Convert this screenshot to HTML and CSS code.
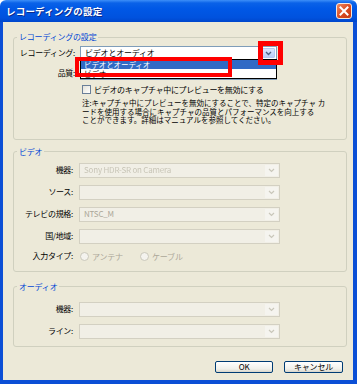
FILE: index.html
```html
<!DOCTYPE html>
<html lang="ja">
<head>
  <meta charset="UTF-8" />
  <title>レコーディングの設定</title>
  <link rel="stylesheet" href="styles.css">
</head>
<body>
  <div class="window">
    <div class="titlebar">
      <span class="title">レコーディングの設定</span>
      <span class="close">
        <svg width="14" height="14" viewBox="0 0 14 14"><path d="M3.5 3.5L10.5 10.5M10.5 3.5L3.5 10.5" stroke="#fff" stroke-width="2" stroke-linecap="square"/></svg>
      </span>
    </div>

    <div class="frame">
      <fieldset class="group group-rec">
        <legend>レコーディングの設定</legend>
        <div class="row">
          <span class="label">レコーディング:</span>
          <div class="combo active">
            <span class="value">ビデオとオーディオ</span>
            <span class="drop"><svg width="7" height="5" viewBox="0 0 7 5"><path d="M1 1l2.5 2.5L6 1" fill="none" stroke="#4d6185" stroke-width="1.4"/></svg></span>
            <ul class="droplist">
              <li class="selected">ビデオとオーディオ</li>
              <li>ビデオ</li>
            </ul>
          </div>
        </div>
        <div class="row">
          <span class="label">品質:</span>
          <div class="combo active">
            <span class="value"></span>
            <span class="drop"><svg width="7" height="5" viewBox="0 0 7 5"><path d="M1 1l2.5 2.5L6 1" fill="none" stroke="#4d6185" stroke-width="1.4"/></svg></span>
          </div>
        </div>
        <label class="check"><span class="box"></span>ビデオのキャプチャ中にプレビューを無効にする</label>
        <p class="note">注:キャプチャ中にプレビューを無効にすることで、特定のキャプチャ カ<br>ードを使用する場合にキャプチャの品質とパフォーマンスを向上する<br>ことができます。詳細はマニュアルを参照してください。</p>
      </fieldset>

      <fieldset class="group group-video">
        <legend>ビデオ</legend>
        <div class="row">
          <span class="label">機器:</span>
          <div class="combo"><span class="value blurred">Sony HDR-SR on Camera</span><span class="drop"><svg width="7" height="5" viewBox="0 0 7 5"><path d="M1 1l2.5 2.5L6 1" fill="none" stroke="#c9c7ba" stroke-width="1.2"/></svg></span></div>
        </div>
        <div class="row">
          <span class="label">ソース:</span>
          <div class="combo"><span class="value"></span><span class="drop"><svg width="7" height="5" viewBox="0 0 7 5"><path d="M1 1l2.5 2.5L6 1" fill="none" stroke="#c9c7ba" stroke-width="1.2"/></svg></span></div>
        </div>
        <div class="row">
          <span class="label">テレビの規格:</span>
          <div class="combo"><span class="value">NTSC_M</span><span class="drop"><svg width="7" height="5" viewBox="0 0 7 5"><path d="M1 1l2.5 2.5L6 1" fill="none" stroke="#c9c7ba" stroke-width="1.2"/></svg></span></div>
        </div>
        <div class="row">
          <span class="label">国/地域:</span>
          <div class="combo"><span class="value"></span><span class="drop"><svg width="7" height="5" viewBox="0 0 7 5"><path d="M1 1l2.5 2.5L6 1" fill="none" stroke="#c9c7ba" stroke-width="1.2"/></svg></span></div>
        </div>
        <div class="row row-radio">
          <span class="label">入力タイプ:</span>
          <div class="radios">
            <span class="radio"><span class="dot"></span>アンテナ</span>
            <span class="radio"><span class="dot"></span>ケーブル</span>
          </div>
        </div>
      </fieldset>

      <fieldset class="group group-audio">
        <legend>オーディオ</legend>
        <div class="row">
          <span class="label">機器:</span>
          <div class="combo"><span class="value"></span><span class="drop"><svg width="7" height="5" viewBox="0 0 7 5"><path d="M1 1l2.5 2.5L6 1" fill="none" stroke="#c9c7ba" stroke-width="1.2"/></svg></span></div>
        </div>
        <div class="row">
          <span class="label">ライン:</span>
          <div class="combo"><span class="value"></span><span class="drop"><svg width="7" height="5" viewBox="0 0 7 5"><path d="M1 1l2.5 2.5L6 1" fill="none" stroke="#c9c7ba" stroke-width="1.2"/></svg></span></div>
        </div>
      </fieldset>

      <div class="buttons">
        <button class="btn">OK</button>
        <button class="btn">キャンセル</button>
      </div>
    </div>

    <span class="mark mark-drop"></span>
    <span class="mark mark-item"></span>
  </div>
</body>
</html>
```

FILE: styles.css
```css
body {
  margin: 0;
  background: #fff;
  font-family: "Noto Sans CJK JP", "Liberation Sans", sans-serif;
  font-size: 8px;
  color: #000;
}
.window {
  position: relative;
  width: 357px;
  height: 384px;
  display: flex;
  flex-direction: column;
}
.titlebar {
  height: 22px;
  flex: none;
  display: flex;
  align-items: center;
  justify-content: space-between;
  padding: 0 5px 0 6px;
  border-radius: 6px 6px 0 0;
  background: linear-gradient(#3d8ff8 0, #0a62e8 3px, #0058e6 40%, #0052de 80%, #0047cc 100%);
}
.title {
  color: #fff;
  font-weight: bold;
  font-size: 9.5px;
  letter-spacing: 0.2px;
  text-shadow: 1px 1px #0b2b8c;
}
.close {
  width: 16px;
  height: 16px;
  box-sizing: border-box;
  border: 1px solid #f4e8e0;
  border-radius: 3px;
  background: linear-gradient(135deg, #ee8a62, #d9491f 55%, #c23a17);
  display: flex;
  align-items: center;
  justify-content: center;
}
.frame {
  flex: 1;
  background: #ece9d8;
  border: solid #0b4fd6;
  border-width: 0 4px 4px 3px;
  padding-top: 10px;
}
.group {
  margin: 0 6px 0 10px;
  padding: 0 0 0 2px;
  border: 1px solid #d0d0bf;
  border-radius: 3px;
  min-inline-size: 0;
}
.group legend {
  color: #0046d5;
  font-size: 8px;
  line-height: 10px;
  padding: 0 2px;
  margin-left: 1px;
  letter-spacing: -0.2px;
}
.group-rec { padding-top: 4px; padding-bottom: 14px; }
.group-video { margin-top: 7px; padding-top: 6px; padding-bottom: 9px; }
.group-audio { margin-top: 10px; padding-top: 10px; padding-bottom: 7px; }

.row {
  display: grid;
  grid-template-columns: 59px 197px;
  column-gap: 5px;
  align-items: center;
  height: 14px;
}
.row + .row { margin-top: 6px; }
.group-video .row, .group-audio .row {
  grid-template-columns: 57px 201px;
  column-gap: 6px;
  height: 15px;
}
.group-video .row + .row, .group-audio .row + .row { margin-top: 7px; }
.group-video .row-radio { height: 11px; }

.label {
  text-align: right;
  white-space: nowrap;
  letter-spacing: -0.3px;
  line-height: 10px;
}
.combo {
  position: relative;
  height: 100%;
  box-sizing: border-box;
  border: 1px solid #d3d0c2;
  background: #f1efe6;
  display: flex;
  align-items: center;
  justify-content: space-between;
  padding: 1px;
}
.combo .value {
  padding-left: 3px;
  color: #aca899;
  line-height: 10px;
  letter-spacing: -0.2px;
}
.combo .value.blurred {
  color: #c8c5b7;
  filter: blur(0.5px);
}
.combo .drop {
  width: 13px;
  height: 100%;
  box-sizing: border-box;
  background: #f5f4ef;
  display: flex;
  align-items: center;
  justify-content: center;
}
.combo.active {
  border-color: #7f9db9;
  background: #fff;
}
.combo.active .value { color: #000; }
.combo.active .drop {
  background: linear-gradient(#dbe6fd, #b9cdf7);
  border: 1px solid #b4c8f2;
  border-radius: 1px;
}
.droplist {
  position: absolute;
  top: 12px;
  left: -1px;
  right: -1px;
  margin: 0;
  padding: 0;
  list-style: none;
  background: #fff;
  border: 1px solid #000;
  z-index: 2;
}
.droplist li {
  height: 9px;
  font-size: 7.5px;
  line-height: 9px;
  padding-left: 3px;
  letter-spacing: -0.1px;
  overflow: hidden;
}
.droplist li.selected {
  background: #316ac5;
  color: #fff;
}

.check {
  display: flex;
  align-items: center;
  gap: 3px;
  margin: 5px 0 0 66px;
  height: 9px;
  line-height: 9px;
  letter-spacing: -0.3px;
}
.check .box {
  width: 9px;
  height: 9px;
  box-sizing: border-box;
  border: 1px solid #6a7f99;
  background: linear-gradient(135deg, #e4e2d8, #fff);
}
.note {
  margin: 5px 0 0 66px;
  font-size: 7.5px;
  line-height: 8.5px;
  letter-spacing: 0;
  white-space: nowrap;
}

.radios {
  display: flex;
  align-items: center;
  padding-left: 1px;
  color: #aca899;
}
.radio {
  display: flex;
  align-items: center;
  gap: 3px;
  width: 60px;
  letter-spacing: -0.2px;
}
.radio .dot {
  width: 9px;
  height: 9px;
  box-sizing: border-box;
  border: 1px solid #cac8bb;
  border-radius: 50%;
  background: #f4f3ee;
}

.buttons {
  display: flex;
  justify-content: flex-end;
  gap: 11px;
  margin: 14px 10px 0 0;
}
.btn {
  width: 58px;
  height: 12px;
  padding: 0;
  font-family: inherit;
  font-size: 8px;
  line-height: 10px;
  color: #000;
  border: 1px solid #003c74;
  border-radius: 2px;
  background: linear-gradient(#fff, #f0f0ea 70%, #d8d5ca);
  letter-spacing: -0.2px;
}
.btn + .btn { width: 59px; }

.mark {
  position: absolute;
  box-sizing: border-box;
  border: 4px solid #f00;
  z-index: 5;
}
.mark-drop {
  left: 258px;
  top: 41px;
  width: 25px;
  height: 24px;
  border-width: 5px;
}
.mark-item {
  left: 75px;
  top: 57px;
  width: 157px;
  height: 20px;
}
```
